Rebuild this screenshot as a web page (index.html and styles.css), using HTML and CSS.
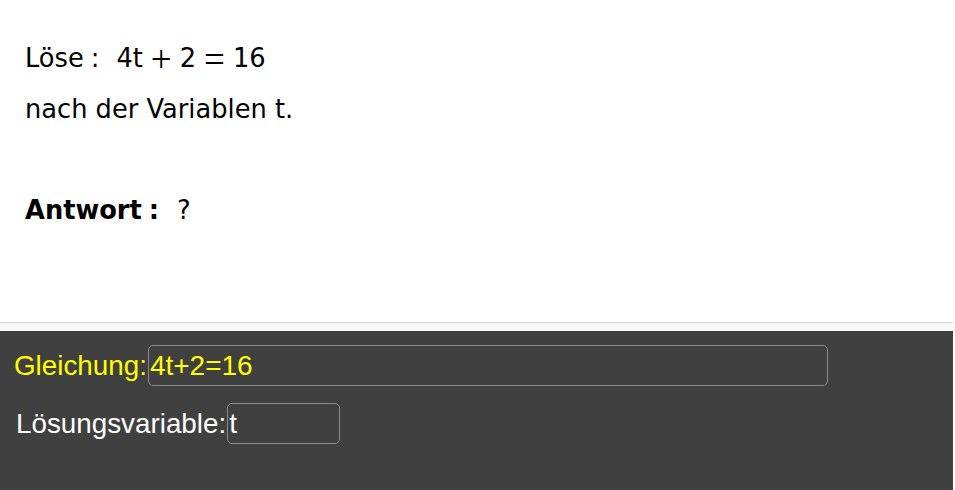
FILE: index.html
```
<!DOCTYPE html>
<html lang="de">
<head>
<meta charset="utf-8">
<title>Gleichung lösen</title>
<link rel="stylesheet" href="styles.css">
</head>
<body>
<div class="page">
  <div class="content">
    <p class="line first">Löse<span class="colon">:</span><span class="math">4t<span class="op">+</span>2<span class="op">=</span>16</span></p>
    <p class="line">nach der Variablen t.</p>
    <p class="line answer"><b class="bold">Antwort<span class="colon">:</span></b><span class="q">?</span></p>
  </div>
  <div class="divider"></div>
  <div class="panel">
    <div class="row">
      <label class="label yellow" for="eq">Gleichung:</label>
      <input id="eq" class="field wide yellow" type="text" value="4t+2=16">
    </div>
    <div class="row">
      <label class="label white" for="var">Lösungsvariable:</label>
      <input id="var" class="field narrow white" type="text" value="t">
    </div>
  </div>
</div>
</body>
</html>
```
FILE: styles.css
```
html, body {
  margin: 0;
  padding: 0;
  background: #ffffff;
}
.page {
  width: 953px;
  height: 490px;
  display: flex;
  flex-direction: column;
  overflow: hidden;
}
.content {
  height: 322px;
  padding: 40px 0 0 25px;
  box-sizing: border-box;
  font-family: "DejaVu Sans", sans-serif;
  font-size: 25.7px;
  color: #000;
}
.line {
  margin: 0;
  height: 51px;
  line-height: 36px;
}
.answer {
  margin-top: 50px;
}
.colon {
  margin-left: 7px;
}
.math {
  margin-left: 17px;
}
.op {
  font-family: "Liberation Serif", serif;
  font-size: 37px;
  margin: 0 8px;
  line-height: 20px;
  vertical-align: -5px;
}
.bold {
  font-weight: bold;
}
.q {
  margin-left: 18px;
}
.divider {
  height: 8px;
  border-top: 1px solid #d6d6d6;
  background: #f7f7f7;
}
.panel {
  flex: 1;
  background: #404040;
  padding: 14px 0 0 14px;
  display: flex;
  flex-direction: column;
  gap: 17px;
}
.row {
  display: flex;
  align-items: center;
  height: 41px;
}
.label {
  font-family: "Liberation Sans", Arial, sans-serif;
  font-size: 27.8px;
  line-height: 32px;
}
.yellow { color: #ffff00; }
.white { color: #ffffff; }
.row:nth-child(2) .label { margin-left: 2px; }
.field {
  box-sizing: border-box;
  height: 41px;
  margin: 0 0 0 1px;
  padding: 0 1px;
  background: transparent;
  border: 1.5px solid #8a8a8a;
  border-radius: 5px;
  font-family: "Liberation Sans", Arial, sans-serif;
  font-size: 28px;
  outline: none;
}
.wide { width: 680px; }
.narrow { width: 113px; }
```
